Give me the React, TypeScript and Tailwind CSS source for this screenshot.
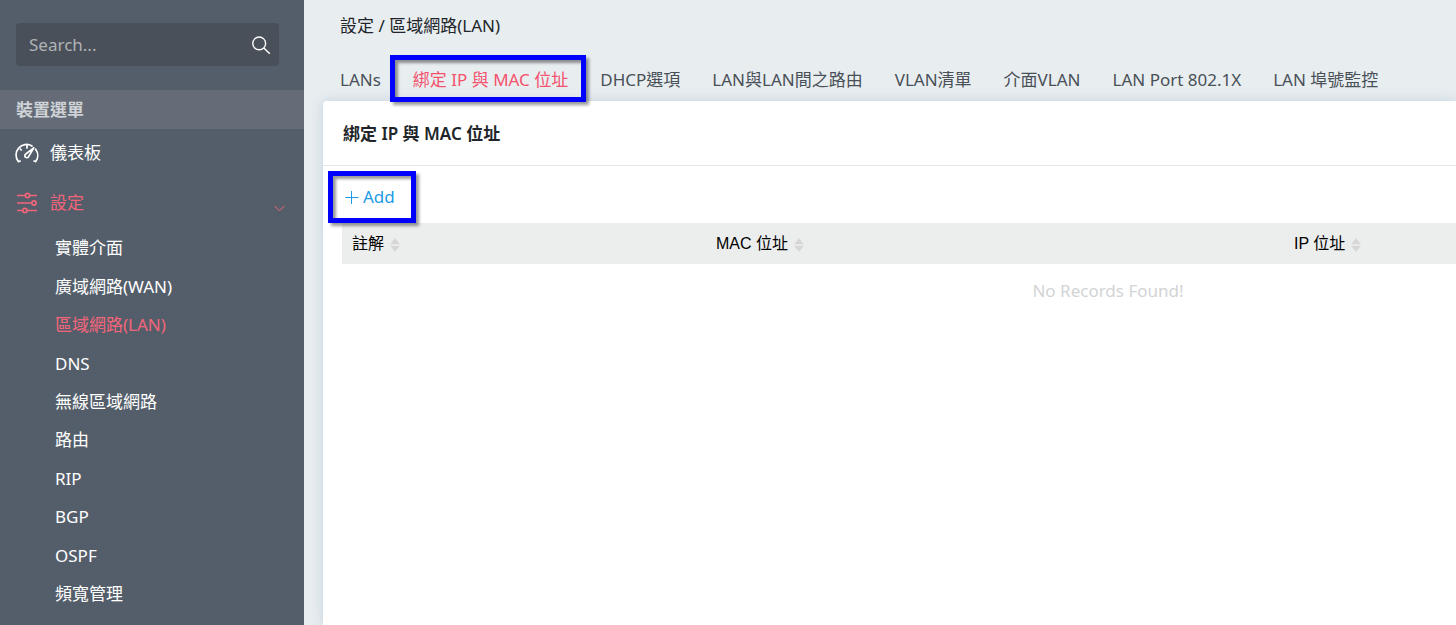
import React from "react";

const sans = "font-['Noto_Sans','Noto_Sans_CJK_TC',sans-serif]";

const menuItems = [
  "實體介面",
  "廣域網路(WAN)",
  "區域網路(LAN)",
  "DNS",
  "無線區域網路",
  "路由",
  "RIP",
  "BGP",
  "OSPF",
  "頻寬管理",
];

const tabs = [
  "LANs",
  "綁定 IP 與 MAC 位址",
  "DHCP選項",
  "LAN與LAN間之路由",
  "VLAN清單",
  "介面VLAN",
  "LAN Port 802.1X",
  "LAN 埠號監控",
];

function SearchIcon() {
  return (
    <svg width="20" height="20" viewBox="0 0 20 20" fill="none" stroke="currentColor" strokeWidth="1.4" aria-hidden="true">
      <circle cx="8.2" cy="8.4" r="6.4" />
      <path d="M12.8 13 L18.8 18.8" />
    </svg>
  );
}

function GaugeIcon() {
  return (
    <svg width="24" height="20" viewBox="0 0 24 20" fill="none" stroke="currentColor" strokeWidth="1.7" strokeLinecap="round" strokeLinejoin="round" aria-hidden="true">
      <path d="M17 3 A10.5 10.5 0 0 0 3.4 18.6 L5.2 18" />
      <path d="M20.6 6.2 A10.5 10.5 0 0 1 20.8 18.6 L19 18" />
      <path d="M12 2 V5 M5.2 6 L6.2 7" />
      <path d="M18.8 4.8 L10.8 11 A2 2 0 1 0 13.6 13.6 Z" />
    </svg>
  );
}

function SlidersIcon() {
  return (
    <svg width="22" height="22" viewBox="0 0 22 22" fill="none" stroke="currentColor" strokeWidth="1.6" aria-hidden="true">
      <path d="M1 3.5 H9.2 M13.8 3.5 H21 M1 11 H15.8 M1 18.5 H6.6 M11.2 18.5 H21" />
      <circle cx="11.5" cy="3.5" r="2.1" />
      <circle cx="18" cy="11" r="2.1" />
      <circle cx="8.9" cy="18.5" r="2.1" />
    </svg>
  );
}

function SortIcon() {
  return (
    <svg width="10" height="14" viewBox="0 0 10 14" fill="#d6d6d6" className="mt-[3px]" aria-hidden="true">
      <path d="M5 0 L9.8 6.3 H0.2 Z M0.2 7.7 H9.8 L5 14 Z" />
    </svg>
  );
}

function Highlight({ className }: { className: string }) {
  return (
    <span
      aria-hidden="true"
      className={`pointer-events-none absolute z-10 border-5 border-[#0000ff] shadow-[3px_3px_3px_rgba(0,0,0,0.4),inset_3px_3px_3px_rgba(0,0,0,0.4)] ${className}`}
    />
  );
}

function Sidebar() {
  return (
    <aside className="w-[304px] shrink-0 bg-[#545e6a] text-[17px] text-white">
      <div className="px-4 pt-[23px] pb-6">
        <form className="mr-[9px] flex h-[43px] items-center rounded bg-[#495059] pr-2 pl-[13px]">
          <input
            type="text"
            aria-label="Search"
            placeholder="Search..."
            className="min-w-0 flex-1 bg-transparent outline-none placeholder:text-[#b0b2b5]"
          />
          <button type="button" aria-label="Submit search">
            <SearchIcon />
          </button>
        </form>
      </div>
      <h2 className="bg-[#656c77] px-4 text-[17px] leading-[39px] font-bold text-[#cfd2d6]">裝置選單</h2>
      <nav>
        <a href="#dashboard" className="flex h-12 items-center gap-[11px] pl-[15px]">
          <GaugeIcon />
          儀表板
        </a>
        <a href="#settings" className="flex h-[52px] items-center gap-3 pr-[19px] pl-4 text-[#f4657a]">
          <SlidersIcon />
          <span className="flex-1">設定</span>
          <svg width="11" height="7" viewBox="0 0 11 7" fill="none" stroke="currentColor" className="mt-[10px]" aria-hidden="true">
            <path d="M0.5 0.8 L5.5 5.8 L10.5 0.8" />
          </svg>
        </a>
        <ul className="grid h-96 auto-rows-fr pl-[55px]">
          {menuItems.map((item, i) => (
            <li key={item} className="flex items-center">
              <a href={`#menu-${i}`} className={i === 2 ? "text-[#f4657a]" : ""}>
                {item}
              </a>
            </li>
          ))}
        </ul>
      </nav>
    </aside>
  );
}

function HeaderCell({ children, className }: { children: React.ReactNode; className: string }) {
  return (
    <th scope="col" className={`px-[10px] text-left font-normal ${className}`}>
      <button type="button" className="flex items-center gap-[6px]">
        {children}
        <SortIcon />
      </button>
    </th>
  );
}

export default function App() {
  return (
    <div className={`flex h-screen min-h-[540px] overflow-hidden bg-[#e8edf0] text-[#212529] ${sans}`}>
      <Sidebar />
      <main className="flex min-w-0 flex-1 flex-col pl-[19px]">
        <div className="px-[17px] pt-3 text-[17px] leading-7">設定 / 區域網路(LAN)</div>
        <nav className="mt-[26px] flex gap-8 px-[17px] text-[17px] leading-7 whitespace-nowrap text-[#495057]">
          {tabs.map((tab, i) => (
            <a key={tab} href={`#tab-${i}`} className={i === 1 ? "relative text-[#f4516c]" : ""}>
              {tab}
              {i === 1 && <Highlight className="-top-[11px] -right-[18px] -bottom-2 -left-[23px]" />}
            </a>
          ))}
        </nav>
        <section className="mt-[7px] flex-1 rounded-tl bg-white shadow-[0_0_13px_#c5d3df]">
          <h1 className="border-b border-[#e4e6e8] px-5 pt-px text-[17px] leading-[63px] font-semibold">綁定 IP 與 MAC 位址</h1>
          <div className="flex h-[57px] items-center px-[22px] pt-1">
            <button type="button" className="relative flex items-center gap-1 text-[17px] leading-7 text-[#1c9be6]">
              <svg width="14" height="14" viewBox="0 0 14 14" stroke="currentColor" aria-hidden="true">
                <path d="M0.5 7.5 H13.5 M6.5 1 V14" />
              </svg>
              Add
              <Highlight className="-top-3 -right-[21px] -bottom-3 -left-[17px]" />
            </button>
          </div>
          <div className="overflow-hidden pl-[19px]">
            <table className="w-[1532px] table-fixed">
              <thead className="h-[41px] bg-[#eceeed] font-['Liberation_Sans','Noto_Sans_CJK_TC',sans-serif] text-[16px] text-black">
                <tr>
                  <HeaderCell className="w-[364px]">註解</HeaderCell>
                  <HeaderCell className="w-[578px]">MAC 位址</HeaderCell>
                  <HeaderCell className="">IP 位址</HeaderCell>
                </tr>
              </thead>
              <tbody>
                <tr>
                  <td colSpan={3} className="h-[54px] text-center text-[17px] text-[#d2d4d6]">
                    No Records Found!
                  </td>
                </tr>
              </tbody>
            </table>
          </div>
        </section>
      </main>
    </div>
  );
}
